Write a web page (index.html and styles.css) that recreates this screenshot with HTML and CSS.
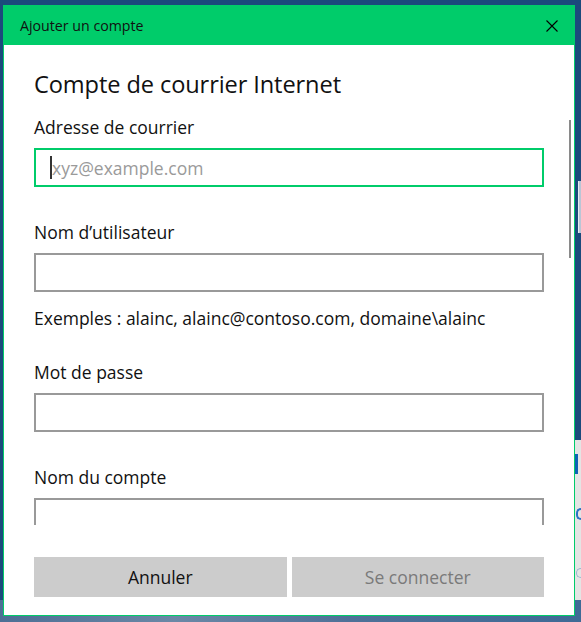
FILE: index.html
```html
<!DOCTYPE html>
<html lang="fr">
<head>
<meta charset="utf-8">
<title>Ajouter un compte</title>
<link rel="stylesheet" href="styles.css">
</head>
<body>
<div class="desktop">
  <div class="bg-app">
    <div class="bg-accent"></div>
    <div class="bg-glyph"></div>
    <div class="bg-glyph faint"></div>
  </div>
  <div class="bg-tile"></div>
  <div class="bg-bottom"></div>

  <div class="dialog">
    <div class="titlebar">
      <span class="title">Ajouter un compte</span>
      <button class="close" aria-label="Fermer">
        <svg width="12" height="12" viewBox="0 0 12 12"><path d="M0.5 0.5 L11.5 11.5 M11.5 0.5 L0.5 11.5" stroke="#000" stroke-width="1.1" fill="none"/></svg>
      </button>
    </div>
    <div class="scroll">
      <h1 class="heading">Compte de courrier Internet</h1>
      <label class="label">Adresse de courrier</label>
      <div class="input focused"><span class="caret"></span><span class="placeholder">xyz@example.com</span></div>
      <label class="label">Nom d’utilisateur</label>
      <div class="input"></div>
      <p class="hint">Exemples : alainc, alainc@contoso.com, domaine\alainc</p>
      <label class="label">Mot de passe</label>
      <div class="input"></div>
      <label class="label">Nom du compte</label>
      <div class="input"></div>
      <div class="scrollbar"></div>
    </div>
    <div class="actions">
      <button class="btn">Annuler</button>
      <button class="btn disabled">Se connecter</button>
    </div>
  </div>
</div>
</body>
</html>
```
FILE: styles.css
```css
* { box-sizing: border-box; }
html, body { margin: 0; padding: 0; }
body {
  width: 581px;
  height: 622px;
  overflow: hidden;
  background: #1b4a7c;
  font-family: "Open Sans", "Noto Sans", sans-serif;
}
.desktop {
  position: relative;
  width: 581px;
  height: 622px;
  padding: 5px 0 0 3px;
}
.bg-tile {
  position: absolute;
  left: 578px; top: 181px;
  width: 4px; height: 52px;
  background: #b9c6d6;
  border-left: 1px solid #e6ecf2;
}
.bg-app {
  position: absolute;
  left: 575px; top: 440px;
  width: 6px; height: 160px;
  background: #e4e4e4;
}
.bg-accent {
  position: absolute;
  left: 0; top: 14px;
  width: 3px; height: 20px;
  background: #0f62b4;
}
.bg-glyph {
  position: absolute;
  left: 1px; top: 68px;
  width: 5px; height: 12px;
  border: 2px solid #2a73c5;
  border-right: 0;
  border-radius: 6px 0 0 6px;
}
.bg-glyph.faint { top: 128px; height: 10px; border-color: #9db5cf; border-width: 1px; }
.bg-bottom {
  position: absolute;
  left: 0; top: 600px;
  width: 581px; height: 22px;
  background: linear-gradient(90deg, #4d6f95 0%, #6b88a6 30%, #4f7198 60%, #3f6a96 100%);
}
.dialog {
  position: relative;
  width: 572px;
  height: 611px;
  background: #fff;
  border: 1px solid #00cc6a;
  display: flex;
  flex-direction: column;
}
.titlebar {
  height: 39px;
  background: #00cc6a;
  display: flex;
  align-items: center;
  justify-content: space-between;
  padding: 0 15px 0 16px;
  flex-shrink: 0;
}
.title {
  font-size: 14.2px;
  color: #111;
}
.close {
  background: none;
  border: 0;
  padding: 0;
  width: 14px;
  height: 14px;
  display: flex;
  align-items: center;
  justify-content: center;
}
.scroll {
  position: relative;
  height: 480px;
  overflow: hidden;
  padding: 23px 30px 0 30px;
  flex-shrink: 0;
}
.heading {
  margin: 0 0 15px;
  font-weight: 400;
  font-size: 23.6px;
  line-height: 32px;
  color: #111;
  letter-spacing: -0.1px;
}
.label {
  display: block;
  font-size: 17.5px;
  line-height: 24px;
  color: #111;
  margin-bottom: 9px;
}
.input {
  height: 39px;
  border: 2px solid #999;
  margin-bottom: 33px;
  display: flex;
  align-items: center;
  padding-left: 14px;
}
.input.focused { border-color: #00cc6a; }
.caret {
  width: 2px;
  height: 23px;
  background: #333;
}
.placeholder {
  font-size: 17.5px;
  color: #9a9a9a;
}
.hint {
  margin: -19px 0 30px;
  font-size: 17.5px;
  line-height: 24px;
  color: #111;
}
.scrollbar {
  position: absolute;
  right: 3px;
  top: 75px;
  width: 2px;
  height: 138px;
  background: #8a8a8a;
}
.actions {
  flex: 1;
  display: flex;
  gap: 5px;
  padding: 32px 30px 17px 30px;
}
.btn {
  flex: 1;
  height: 40px;
  border: 0;
  background: #cccccc;
  font-family: inherit;
  font-size: 17.5px;
  color: #111;
}
.btn.disabled { color: #7a7a7a; }
```
